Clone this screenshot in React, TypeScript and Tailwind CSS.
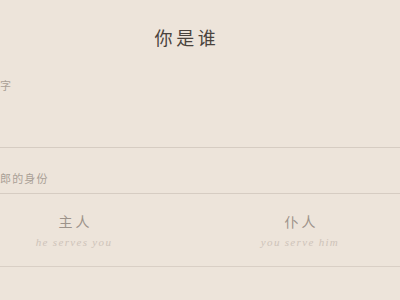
import React from "react";

const cjk = { fontFamily: '"Noto Sans CJK SC", "Noto Sans", sans-serif' };
const serif = { fontFamily: '"Liberation Serif", "DejaVu Serif", serif' };

interface Role {
  name: string;
  note: string;
}

const roles: Role[] = [
  { name: "主人", note: "he serves you" },
  { name: "仆人", note: "you serve him" },
];

export default function App() {
  return (
    <div className="h-[300px] w-[400px] overflow-hidden bg-[#ede4da]">
      <div className="-ml-[39px] w-[452px]" style={cjk}>
        <h1 className="pt-[24px] text-center text-[18px] leading-[26px] font-normal tracking-[0.2em] text-[#4a433d]">
          你是谁
        </h1>

        <label className="mt-[27px] block pl-[27px] text-[11px] leading-[16px] tracking-[0.1em] text-[#aaa096]">
          名字
        </label>
        <input
          className="block h-[55px] w-full border-b border-[#d6ccc2] bg-transparent px-[27px] outline-none"
          aria-label="名字"
        />

        <div className="border-b border-[#d6ccc2] pt-[22px] pb-[7px]">
          <span className="block pl-[27px] text-[11px] leading-[16px] tracking-[0.1em] text-[#aaa096]">
            新郎的身份
          </span>
        </div>

        <div className="grid grid-cols-2 border-b border-[#d9cfc5] pt-[17px] pb-[16px]">
          {roles.map((r) => (
            <button key={r.name} className="flex flex-col items-center">
              <span className="pl-[0.2em] text-[14px] leading-[20px] tracking-[0.2em] text-[#9d938a]">
                {r.name}
              </span>
              <span
                className="mt-[3px] text-[11px] leading-[16px] italic tracking-[0.12em] text-[#cdc3b9]"
                style={serif}
              >
                {r.note}
              </span>
            </button>
          ))}
        </div>
      </div>
    </div>
  );
}
